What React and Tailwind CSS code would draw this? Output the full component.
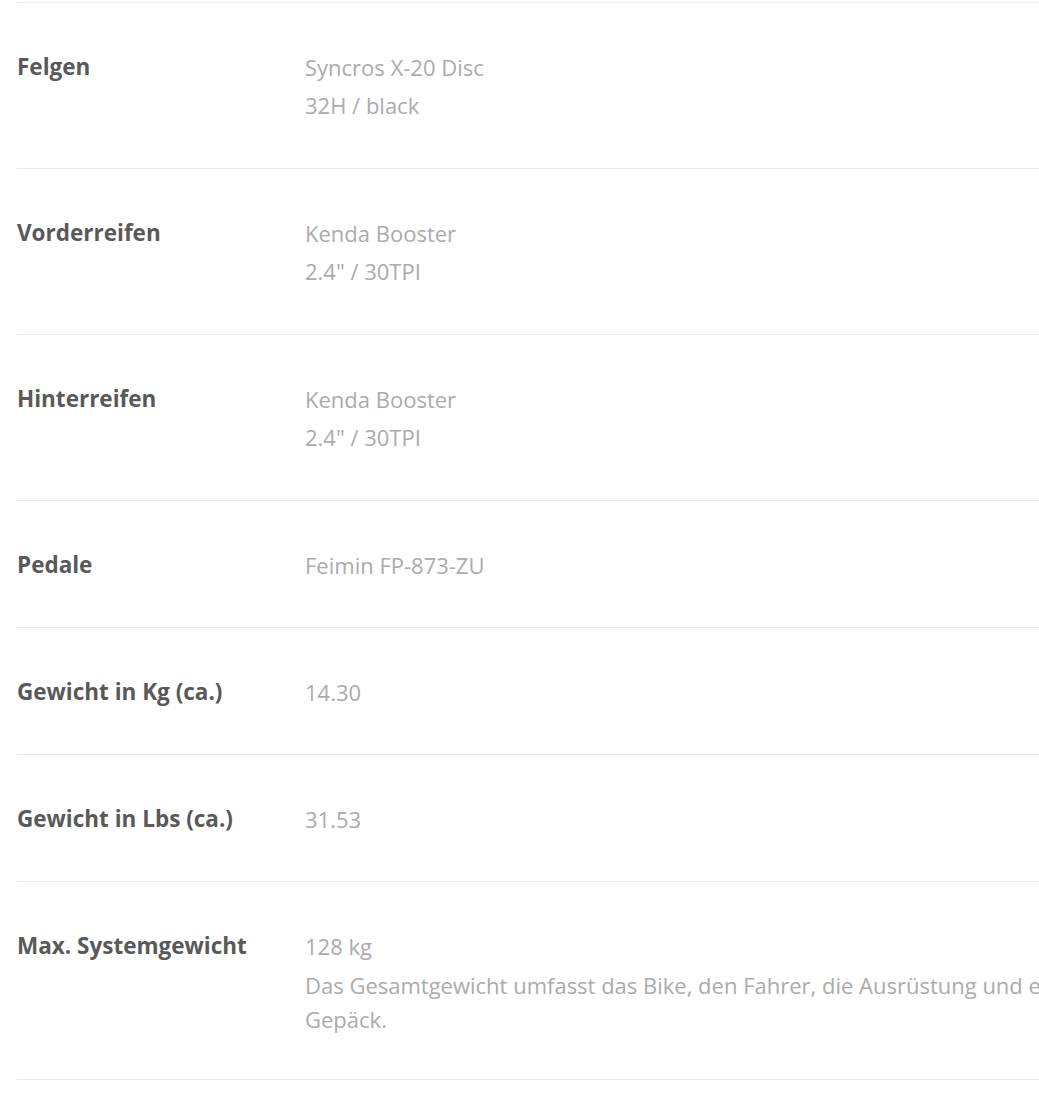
const SPECS = [
  { label: 'Felgen', lines: ['Syncros X-20 Disc', '32H / black'] },
  { label: 'Vorderreifen', lines: ['Kenda Booster', '2.4" / 30TPI'] },
  { label: 'Hinterreifen', lines: ['Kenda Booster', '2.4" / 30TPI'] },
  { label: 'Pedale', lines: ['Feimin FP-873-ZU'] },
  { label: 'Gewicht in Kg (ca.)', lines: ['14.30'] },
  { label: 'Gewicht in Lbs (ca.)', lines: ['31.53'] },
  {
    label: 'Max. Systemgewicht',
    lines: ['128 kg'],
    note: 'Das Gesamtgewicht umfasst das Bike, den Fahrer, die Ausrüstung und eventuelles Gepäck.',
  },
];

export default function App() {
  return (
    <div className="w-screen min-h-screen overflow-hidden bg-white font-['Open_Sans',sans-serif]">
      <div className="w-[1200px] pl-[17px] pt-[2px]">
        <div className="border-t border-[#ececec]">
          {SPECS.map((row) => (
            <div
              key={row.label}
              className={`flex pt-[45px] border-b border-[#e8e8e8] ${row.lines.length > 1 ? 'pb-[44px]' : 'pb-[43px]'}`}
            >
              <div className="w-[288px] shrink-0 text-[22.5px] leading-[38px] font-bold text-[#595959]">
                {row.label}
              </div>
              <div className="w-[860px] text-[22px] text-[#ababab]">
                {row.lines.map((l, i) => (
                  <div key={i} className="leading-[38px]">{l}</div>
                ))}
                {row.note && <p className="mt-[3px] leading-[34px]">{row.note}</p>}
              </div>
            </div>
          ))}
        </div>
      </div>
    </div>
  );
}
